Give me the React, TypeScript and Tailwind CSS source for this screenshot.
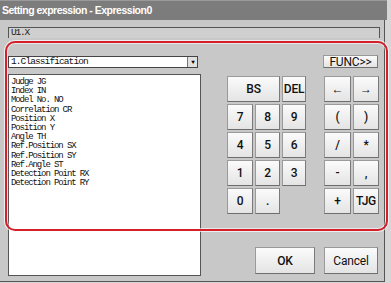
import React from "react";

const mono = { fontFamily: '"Liberation Mono", "DejaVu Sans Mono", monospace' };

const Key = ({ label, className = "" }: { label: string; className?: string }) => (
  <button
    className={
      "flex items-center justify-center bg-gradient-to-b from-[#fbfbfb] to-[#e4e4e4] border border-[#9a9a9a] border-r-[#7a7a7a] border-b-[#6e6e6e] text-[12px] text-[#111] font-medium tracking-[-0.2px] " +
      className
    }
    style={{ fontFamily: 'Roboto, "Liberation Sans", sans-serif' }}
  >
    {label}
  </button>
);

const items = [
  "Judge JG",
  "Index IN",
  "Model No. NO",
  "Correlation CR",
  "Position X",
  "Position Y",
  "Angle TH",
  "Ref.Position SX",
  "Ref.Position SY",
  "Ref.Angle ST",
  "Detection Point RX",
  "Detection Point RY",
];

const App = () => {
  return (
    <div
      className="relative w-[391px] h-[283px] overflow-hidden bg-[#d6d6d6]"
      style={{ fontFamily: '"Liberation Sans", Arial, sans-serif' }}
    >
      <div className="w-[385px] h-[282px] flex flex-col border-r border-b border-[#555]">
        {/* title bar */}
        <div className="h-[20px] w-[387px] bg-[#7c7c7c] border-t border-[#9a9a9a] flex items-center pl-[2px] text-white text-[10.5px] font-bold tracking-[-0.5px]">
          Setting expression - Expression0
        </div>

        <div className="flex-1 bg-[#c8c8c8] pl-[8px] flex flex-col">
          {/* expression field */}
          <div
            className="mt-[7px] w-[372px] h-[11px] border-t border-l border-r border-[#555] bg-[#cfcfcf] flex items-center pl-[2px] text-[9.5px] tracking-[-1.2px] text-[#222]"
            style={mono}
          >
            U1.X
          </div>

          {/* dropdown row */}
          <div className="mt-[17px] flex items-start w-[370px]">
            <div
              className="mt-[1px] w-[190px] h-[12px] bg-white border border-[#444] flex items-center justify-between pl-[2px] text-[9.5px] tracking-[-0.9px] text-[#111]"
              style={mono}
            >
              <span>1.Classification</span>
              <span className="w-[10px] h-[10px] bg-[#e0e0e0] border-l border-[#777] flex items-center justify-center text-[6px] text-black">
                ▼
              </span>
            </div>
            <Key label="FUNC>>" className="ml-auto w-[55px] h-[13px] text-[10px] font-normal leading-none" />
          </div>

          {/* main area */}
          <div className="mt-[6px] flex">
            <div
              className="w-[193px] h-[202px] bg-white border border-[#555] pl-[2px] pt-[3px] text-[9px] leading-[9.2px] tracking-[-1.1px] text-[#111]"
              style={mono}
            >
              {items.map((t) => (
                <div key={t} className="whitespace-pre h-[9.2px]">
                  {t}
                </div>
              ))}
            </div>

            <div className="ml-[26px] mt-[2px] flex flex-col">
              <div className="flex">
                <div className="grid grid-cols-[26px_25px_24px] auto-rows-[26px] gap-x-[2px] gap-y-[2px]">
                  <Key label="BS" className="col-span-2" />
                  <Key label="DEL" className="text-[11px]" />
                  <Key label="7" />
                  <Key label="8" />
                  <Key label="9" />
                  <Key label="4" />
                  <Key label="5" />
                  <Key label="6" />
                  <Key label="1" />
                  <Key label="2" />
                  <Key label="3" />
                  <Key label="0" />
                  <Key label="." />
                </div>
                <div className="ml-[18px] grid grid-cols-[27px_26px] auto-rows-[26px] gap-x-[2px] gap-y-[2px]">
                  <Key label="←" className="font-normal" />
                  <Key label="→" className="font-normal" />
                  <Key label="(" />
                  <Key label=")" />
                  <Key label="/" />
                  <Key label="*" />
                  <Key label="-" />
                  <Key label="," />
                  <Key label="+" />
                  <Key label="TJG" />
                </div>
              </div>

              <div className="mt-[33px] flex">
                <Key label="OK" className="ml-[28px] w-[60px] h-[27px]" />
                <Key label="Cancel" className="ml-[9px] w-[54px] h-[27px] font-normal" />
              </div>
            </div>
          </div>
        </div>
      </div>

      {/* highlight frame */}
      <div className="absolute left-[5px] top-[41px] w-[383px] h-[190px] rounded-[10px] border-2 border-[#d3202a] shadow-[0_0_0_1px_rgba(255,255,255,0.7),inset_0_0_0_1px_rgba(255,255,255,0.6)] pointer-events-none" />
    </div>
  );
};

export default App;
